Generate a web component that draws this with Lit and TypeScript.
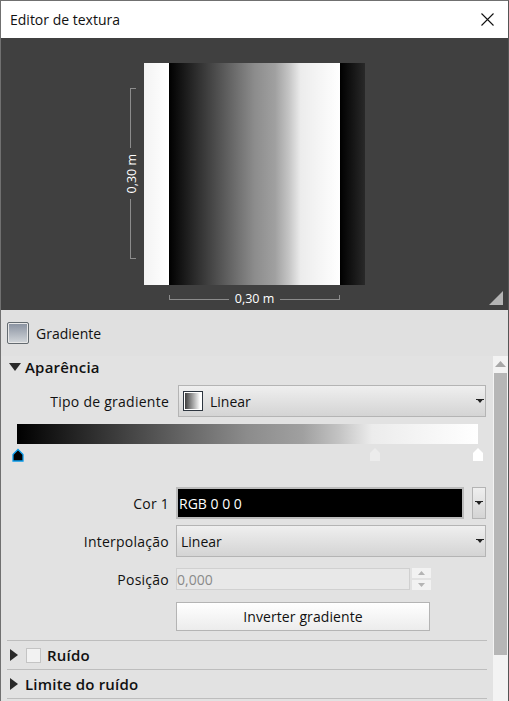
import { LitElement, html, css } from "lit";
import { customElement } from "lit/decorators.js";

const caret = html`<svg class="caret" width="8" height="5" viewBox="0 0 8 5"><path d="M0 0h8v1H6.500L4 4 1.500 1H0z" fill="#222"/></svg>`;
const triDown = html`<svg width="12" height="8" viewBox="0 0 12 8"><path d="M0 0h12L6 8z" fill="#2a2a2a"/></svg>`;
const triRight = html`<svg width="8" height="12" viewBox="0 0 8 12"><path d="M0 0v12l8-6z" fill="#2a2a2a"/></svg>`;

@customElement("app-root")
export class AppRoot extends LitElement {
  static styles = css`
    :host { display: block; width: 509px; height: 701px; overflow: hidden; font-family: "Open Sans", "Noto Sans", sans-serif; font-size: 14px; color: #111; --ramp: #000 0, #8c8c8c 50%, #a0a0a0 62%, #c4c4c4 70%, #ececec 77%, #fff 100%; }
    * { box-sizing: border-box; }
    .window { height: 701px; display: flex; flex-direction: column; border-left: 1px solid #707070; border-top: 1px solid #707070; border-right: 1px solid #555; background: #e2e2e2; }
    .title { height: 37px; flex: none; background: #fff; display: flex; align-items: center; justify-content: space-between; padding: 0 14px 0 9px; font-size: 14px; }
    .title svg { display: block; }
    .stage { height: 272px; flex: none; background: #404040; position: relative; color: #fff; font-size: 12.500px; }
    .tile { position: absolute; left: 143px; top: 25px; width: 221px; height: 222px; background: linear-gradient(90deg, var(--ramp)) 25px 0 / 171px 100% repeat-x; }
    .dim-h { position: absolute; left: 168px; top: 256px; width: 171px; height: 9px; display: flex; align-items: center; gap: 6px; }
    .dim-v { position: absolute; left: 129px; top: 50px; width: 9px; height: 171px; display: flex; flex-direction: column; align-items: center; gap: 6px; }
    .line-h { flex: 1; height: 5px; border-bottom: 1px solid #8c8c8c; margin-top: -3px; }
    .line-h.l { border-left: 1px solid #8c8c8c; }
    .line-h.r { border-right: 1px solid #8c8c8c; }
    .line-v { flex: 1; width: 6px; border-left: 1px solid #8c8c8c; align-self: flex-start; }
    .line-v.t { border-top: 1px solid #8c8c8c; }
    .line-v.b { border-bottom: 1px solid #8c8c8c; }
    .vtext { writing-mode: vertical-rl; transform: rotate(180deg); white-space: nowrap; line-height: 9px; margin-left: -3px; align-self: flex-start; }
    .htext { white-space: nowrap; line-height: 9px; }
    .grip { position: absolute; left: 488px; top: 253px; display: block; }
    .head { height: 46px; flex: none; background: #e0e0e0; display: flex; align-items: center; gap: 7px; padding-left: 6px; }
    .swatch { width: 22px; height: 22px; border: 1px solid #646b70; border-radius: 2px; background: linear-gradient(#88909f, #d2d6da); box-shadow: inset 0 0 0 1px #e8e8e8; }
    .body { flex: 1; display: flex; min-height: 0; }
    .scrollpane { width: 492px; flex: none; padding: 0 5px 0 6px; overflow: hidden; }
    .scrollbar { width: 15px; flex: none; background: #f3f3f3; display: flex; flex-direction: column; align-items: center; padding-top: 5px; }
    .up { display: block; }
    .thumb { width: 13px; height: 282px; background: #b6b6b6; margin-top: 6px; }
    .section { display: flex; align-items: center; font-weight: 600; font-size: 15px; letter-spacing: .2px; height: 21px; }
    .section .arrow { width: 18px; display: flex; align-items: center; padding-left: 2px; }
    .form { margin-left: -6px; }
    .row { display: grid; grid-template-columns: 168px 310px; column-gap: 7px; align-items: center; }
    .label { text-align: right; white-space: nowrap; letter-spacing: .25px; }
    .select { height: 32px; border: 1px solid #b4b4b4; background: linear-gradient(#efefef, #d4d4d4); display: flex; align-items: center; padding: 0 1px 0 4px; gap: 7px; }
    .select.first { margin-left: 2px; }
    .select .grow { flex: 1; }
    .sw2 { width: 20px; height: 20px; border: 1px solid #2e3640; background: linear-gradient(90deg, #333 0, #fff 90%); box-shadow: inset 0 0 0 1px #fff; }
    .gradient { height: 20px; width: 461px; margin: 7px 0 0 16px; background: linear-gradient(90deg, var(--ramp)); }
    .stops { height: 14px; width: 477px; margin: 4px 0 0 11px; position: relative; }
    .stops svg { position: absolute; top: 0; display: block; }
    .s1 { left: 0; }
    .s2 { left: 358px; }
    .s3 { left: 461px; }
    .colorline { display: flex; gap: 8px; }
    .colorbox { width: 288px; height: 32px; border: 2px solid #bcbcbc; background: #000; color: #fff; display: flex; align-items: center; padding-left: 1px; }
    .dropbtn { width: 14px; height: 32px; border: 1px solid #b4b4b4; background: linear-gradient(#efefef, #d4d4d4); display: flex; align-items: center; justify-content: center; }
    .posline { display: flex; gap: 2px; }
    .input { width: 234px; height: 22px; border: 1px solid #d0d0d0; background: #e8e8e8; color: #8a8a8a; display: flex; align-items: center; }
    .spin { width: 19px; display: flex; flex-direction: column; gap: 2px; }
    .spin div { height: 10px; background: #f2f2f2; display: flex; align-items: center; justify-content: center; }
    .button { margin-left: 175px; width: 254px; height: 29px; border: 1px solid #b4b4b4; background: linear-gradient(#fff, #ececec); display: flex; align-items: center; justify-content: center; letter-spacing: .1px; }
    .divider { height: 1px; background: #bdbdbd; width: 480px; }
    .sub { height: 28px; display: flex; align-items: center; font-weight: 600; font-size: 15px; letter-spacing: .2px; }
    .sub .arrow { width: 18px; padding-left: 3px; display: flex; align-items: center; }
    .check { width: 15px; height: 15px; border: 1px solid #c4c4c4; background: #f2f2f2; margin: 0 6px 0 1px; }
    .m1 { margin-top: 8px; }
    .m2 { margin-top: 25px; }
    .m3 { margin-top: 6px; }
    .m4 { margin-top: 11px; }
    .m5 { margin-top: 12px; }
    .m6 { margin-top: 9px; }
  `;

  render() {
    return html`<div class="window">
      <div class="title"><span>Editor de textura</span>
        <svg width="13" height="13" viewBox="0 0 13 13"><path d="M.5.5l12 12M12.500.5l-12 12" stroke="#111" stroke-width="1.100" fill="none"/></svg>
      </div>
      <div class="stage">
        <div class="tile"></div>
        <div class="dim-v"><div class="line-v t"></div><span class="vtext">0,30 m</span><div class="line-v b"></div></div>
        <div class="dim-h"><div class="line-h l"></div><span class="htext">0,30 m</span><div class="line-h r"></div></div>
        <svg class="grip" width="14" height="14" viewBox="0 0 14 14"><path d="M14 0v14H0z" fill="#b4b4b4"/></svg>
      </div>
      <div class="head"><div class="swatch"></div><span>Gradiente</span></div>
      <div class="body">
        <div class="scrollpane">
          <div class="section"><span class="arrow">${triDown}</span>Aparência</div>
          <div class="form">
            <div class="row m1">
              <span class="label">Tipo de gradiente</span>
              <div class="select first"><div class="sw2"></div><span class="grow">Linear</span>${caret}</div>
            </div>
            <div class="gradient"></div>
            <div class="stops">
              <svg class="s1" width="12" height="14" viewBox="0 0 12 14"><path d="M1 13V6.500L6 1.500l5 5V13z" fill="#000" stroke="#0a9bea" stroke-width="1.300"/></svg>
              <svg class="s2" width="10" height="14" viewBox="0 0 10 14"><path d="M0 13V5l5-5 5 5v8z" fill="#ececec"/></svg>
              <svg class="s3" width="10" height="14" viewBox="0 0 10 14"><path d="M0 13V5l5-5 5 5v8z" fill="#fff"/></svg>
            </div>
            <div class="row m2">
              <span class="label">Cor 1</span>
              <div class="colorline"><div class="colorbox">RGB 0 0 0</div><div class="dropbtn">${caret}</div></div>
            </div>
            <div class="row m3">
              <span class="label">Interpolação</span>
              <div class="select"><span class="grow">Linear</span>${caret}</div>
            </div>
            <div class="row m4">
              <span class="label">Posição</span>
              <div class="posline"><div class="input">0,000</div>
                <div class="spin">
                  <div><svg width="7" height="4" viewBox="0 0 7 4"><path d="M0 4h7L3.500 0z" fill="#b4b4b4"/></svg></div>
                  <div><svg width="7" height="4" viewBox="0 0 7 4"><path d="M0 0h7L3.500 4z" fill="#b4b4b4"/></svg></div>
                </div>
              </div>
            </div>
            <div class="button m5">Inverter gradiente</div>
          </div>
          <div class="divider m6"></div>
          <div class="sub"><span class="arrow">${triRight}</span><span class="check"></span>Ruído</div>
          <div class="divider"></div>
          <div class="sub"><span class="arrow">${triRight}</span>Limite do ruído</div>
          <div class="divider"></div>
        </div>
        <div class="scrollbar">
          <svg class="up" width="11" height="6" viewBox="0 0 11 6"><path d="M0 6h11L5.500 0z" fill="#a8a8a8"/></svg>
          <div class="thumb"></div>
        </div>
      </div>
    </div>`;
  }
}
